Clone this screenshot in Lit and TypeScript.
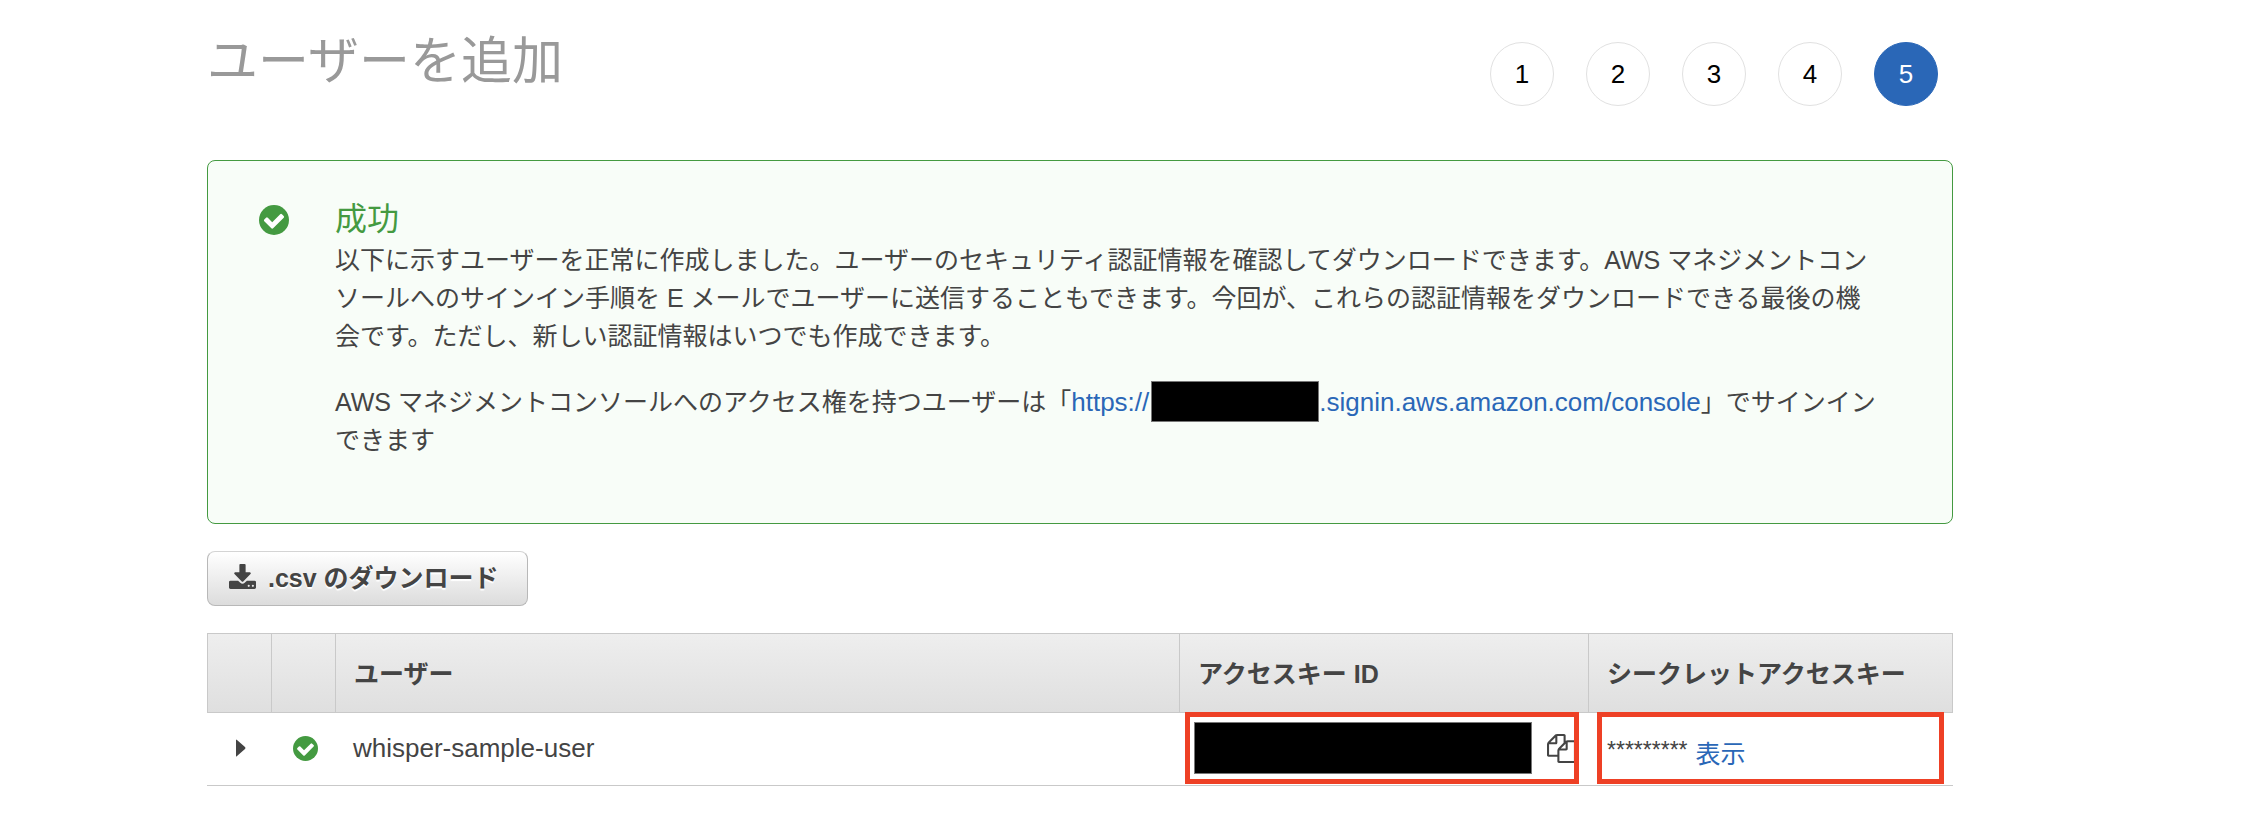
import { LitElement, html, css, svg } from "lit";
import { customElement, property, state } from "lit/decorators.js";
import { classMap } from "lit/directives/class-map.js";

const CHECK =
  "M1412 734q0-28-18-46l-91-90q-19-19-45-19t-45 19l-408 407-226-226q-19-19-45-19t-45 19l-91 90q-18 18-18 46 0 27 18 45l362 362q19 19 45 19 27 0 46-19l543-543q18-18 18-45z";
const DOWNLOAD =
  "M1344 1344q0-26-19-45t-45-19-45 19-19 45 19 45 45 19 45-19 19-45zm256 0q0-26-19-45t-45-19-45 19-19 45 19 45 45 19 45-19 19-45zm128-224v320q0 40-28 68t-68 28h-1472q-40 0-68-28t-28-68v-320q0-40 28-68t68-28h465l135 136q58 56 136 56t136-56l136-136h464q40 0 68 28t28 68zm-325-569q17 41-14 70l-448 448q-18 19-45 19t-45-19l-448-448q-31-29-14-70 17-39 59-39h256v-448q0-26 19-45t45-19h256q26 0 45 19t19 45v448h256q42 0 59 39z";
const COPY =
  "M1696 384q40 0 68 28t28 68v1216q0 40-28 68t-68 28h-960q-40 0-68-28t-28-68v-288h-544q-40 0-68-28t-28-68v-672q0-40 20-88t48-76l408-408q28-28 76-48t88-20h416q40 0 68 28t28 68v328q68-40 128-40h416zm-544 213l-299 299h299v-299zm-640-384l-299 299h299v-299zm196 647l316-316v-416h-384v416q0 40-28 68t-68 28h-416v640h512v-256q0-40 20-88t48-76zm956 804v-1152h-384v416q0 40-28 68t-68 28h-416v640h896z";

@customElement("status-check")
class StatusCheck extends LitElement {
  static styles = css`
    :host {
      display: block;
      width: 25px;
      height: 25px;
    }
    .icon {
      display: block;
      width: 100%;
      height: 100%;
    }
    .disc {
      fill: #449a41;
    }
    .tick {
      fill: #fff;
    }
  `;

  render() {
    return html`<svg class="icon" viewBox="128 128 1536 1536" aria-hidden="true">
      ${svg`<circle class="disc" cx="896" cy="896" r="768"></circle><path class="tick" d=${CHECK}></path>`}
    </svg>`;
  }
}

@customElement("wizard-steps")
class WizardSteps extends LitElement {
  @property({ type: Number }) count = 5;
  @property({ type: Number }) current = 1;

  static styles = css`
    .steps {
      display: flex;
      gap: 32px;
      margin: 0;
      padding: 0;
      list-style: none;
    }
    .step {
      box-sizing: border-box;
      display: grid;
      place-items: center;
      width: 64px;
      height: 64px;
      border: 1px solid #e1e1e1;
      border-radius: 50%;
      color: #000;
      font-size: 26px;
      line-height: 38px;
    }
    .current {
      border-color: #2a67b7;
      background: #2a67b7;
      color: #fff;
    }
  `;

  render() {
    const steps = Array.from({ length: this.count }, (_, i) => i + 1);
    return html`<ol class="steps">
      ${steps.map(
        (n) => html`<li class=${classMap({ step: true, current: n === this.current })}>${n}</li>`
      )}
    </ol>`;
  }
}

@customElement("app-root")
class AppRoot extends LitElement {
  @state() private users = [{ name: "whisper-sample-user", secret: "*********" }];

  static styles = css`
    :host {
      display: block;
      padding: 0 315px 0 207px;
      background: #fff;
      color: #444;
      font-family: "Liberation Sans", "Noto Sans CJK JP", sans-serif;
      font-size: 25px;
      line-height: 38px;
    }
    a {
      color: #2a67b7;
      text-decoration: none;
    }
    button {
      font: inherit;
      color: inherit;
      cursor: pointer;
    }
    .header {
      display: flex;
      justify-content: space-between;
      align-items: flex-start;
      padding: 24px 15px 0 0;
    }
    .title {
      margin: 0;
      color: #999;
      font-size: 51px;
      font-weight: 400;
      line-height: 76px;
    }
    .steps {
      padding-top: 18px;
    }
    .alert {
      display: grid;
      grid-template-columns: 30px 1fr;
      column-gap: 46px;
      margin-top: 54px;
      padding: 37px 72px 64px 51px;
      border: 1px solid #449a41;
      border-radius: 8px;
      background: #f8fdf8;
    }
    .alert-icon {
      width: 30px;
      height: 30px;
      margin-top: 7px;
    }
    .alert-title {
      margin: 0;
      color: #449a41;
      font-size: 32px;
      font-weight: 400;
      line-height: 43px;
    }
    .text {
      margin: 0;
    }
    .text + .text {
      margin-top: 28px;
    }
    .latin {
      font-size: 26px;
    }
    .redacted {
      display: inline-block;
      box-sizing: border-box;
      border: 1px solid #777;
      background: #000;
      vertical-align: middle;
    }
    .redacted-account {
      width: 168px;
      height: 41px;
      margin: -13px 0 -7px 2px;
    }
    .redacted-key {
      width: 338px;
      height: 52px;
    }
    .download {
      display: flex;
      align-items: center;
      gap: 12px;
      height: 55px;
      margin: 27px 0;
      padding: 0 28px 2px 21px;
      border: 1px solid #b8b8b8;
      border-top-color: #d4d4d4;
      border-radius: 8px;
      background: linear-gradient(#fff, #dcdcdc);
      font-weight: 700;
      text-shadow: 0 2px 1px #fff;
    }
    .download-icon {
      width: 27px;
      height: 25px;
      margin-bottom: 2px;
      fill: #444;
    }
    .users {
      width: 100%;
      table-layout: fixed;
      border-collapse: separate;
      border-spacing: 0;
    }
    .col-icon {
      width: 64px;
    }
    .col-key {
      width: 409px;
    }
    .col-secret {
      width: 365px;
    }
    .head {
      box-sizing: border-box;
      height: 80px;
      padding: 2px 18px 0;
      border: 1px solid #c9c9c9;
      border-right-width: 0;
      background: linear-gradient(#eee, #dfdfdf);
      font-weight: 700;
      text-align: left;
      white-space: nowrap;
    }
    .head:last-child {
      border-right-width: 1px;
    }
    .cell {
      box-sizing: border-box;
      height: 73px;
      padding: 0 18px 2px;
      border-bottom: 1px solid #c9c9c9;
    }
    .marked {
      position: relative;
      padding: 0 0 2px 15px;
    }
    .marked::after {
      content: "";
      position: absolute;
      inset: -1px 9px 1px 6px;
      border: 5px solid #ee4025;
      pointer-events: none;
    }
    .marked.secret {
      padding-left: 19px;
    }
    .secret::after {
      left: 9px;
    }
    .line {
      display: flex;
      align-items: center;
    }
    .line-secret {
      align-items: flex-start;
      gap: 8px;
      padding-top: 12px;
    }
    .stars {
      font-size: 23px;
      line-height: 30px;
    }
    .icon-button {
      display: grid;
      padding: 0;
      border: 0;
      background: none;
    }
    .expand {
      margin-left: 11px;
    }
    .arrow {
      width: 10px;
      height: 18px;
      fill: #444;
    }
    .row-check {
      margin-left: 4px;
    }
    .copy {
      margin-left: 15px;
    }
    .copy-icon {
      width: 29px;
      height: 29px;
      fill: #444;
    }
  `;

  render() {
    return html`
      <header class="header">
        <h1 class="title">ユーザーを追加</h1>
        <wizard-steps class="steps" count="5" current="5"></wizard-steps>
      </header>
      <main>
        <section class="alert">
          <status-check class="alert-icon"></status-check>
          <div>
            <h2 class="alert-title">成功</h2>
            <p class="text">以下に示すユーザーを正常に作成しました。ユーザーのセキュリティ認証情報を確認してダウンロードできます。AWS マネジメントコンソールへのサインイン手順を E メールでユーザーに送信することもできます。今回が、これらの認証情報をダウンロードできる最後の機会です。ただし、新しい認証情報はいつでも作成できます。</p>
            <p class="text">AWS マネジメントコンソールへのアクセス権を持つユーザーは「<a class="latin" href="#">https://<span class="redacted redacted-account"></span>.signin.aws.amazon.com/console</a>」でサインインできます</p>
          </div>
        </section>
        <button class="download" type="button">
          <svg class="download-icon" viewBox="64 0 1664 1536" aria-hidden="true">
            <path d=${DOWNLOAD}></path>
          </svg>
          <span>.csv のダウンロード</span>
        </button>
        <table class="users">
          <colgroup>
            <col class="col-icon" />
            <col class="col-icon" />
            <col />
            <col class="col-key" />
            <col class="col-secret" />
          </colgroup>
          <thead>
            <tr>
              <th class="head"></th>
              <th class="head"></th>
              <th class="head" scope="col">ユーザー</th>
              <th class="head" scope="col">アクセスキー ID</th>
              <th class="head" scope="col">シークレットアクセスキー</th>
            </tr>
          </thead>
          <tbody>
            ${this.users.map(
              (user) => html`<tr>
                <td class="cell">
                  <button class="icon-button expand" type="button" aria-label="詳細">
                    <svg class="arrow" viewBox="0 0 10 18" aria-hidden="true">
                      <path d="M0 1Q0 0 1 1L9 8Q10 9 9 10L1 17Q0 18 0 17Z"></path>
                    </svg>
                  </button>
                </td>
                <td class="cell"><status-check class="row-check"></status-check></td>
                <td class="cell latin">${user.name}</td>
                <td class="cell marked">
                  <div class="line">
                    <span class="redacted redacted-key"></span>
                    <button class="icon-button copy" type="button" aria-label="コピー">
                      <svg class="copy-icon" viewBox="0 0 1792 1792" aria-hidden="true">
                        <path d=${COPY}></path>
                      </svg>
                    </button>
                  </div>
                </td>
                <td class="cell marked secret">
                  <div class="line line-secret">
                    <span class="stars">${user.secret}</span>
                    <a href="#">表示</a>
                  </div>
                </td>
              </tr>`
            )}
          </tbody>
        </table>
      </main>
    `;
  }
}
